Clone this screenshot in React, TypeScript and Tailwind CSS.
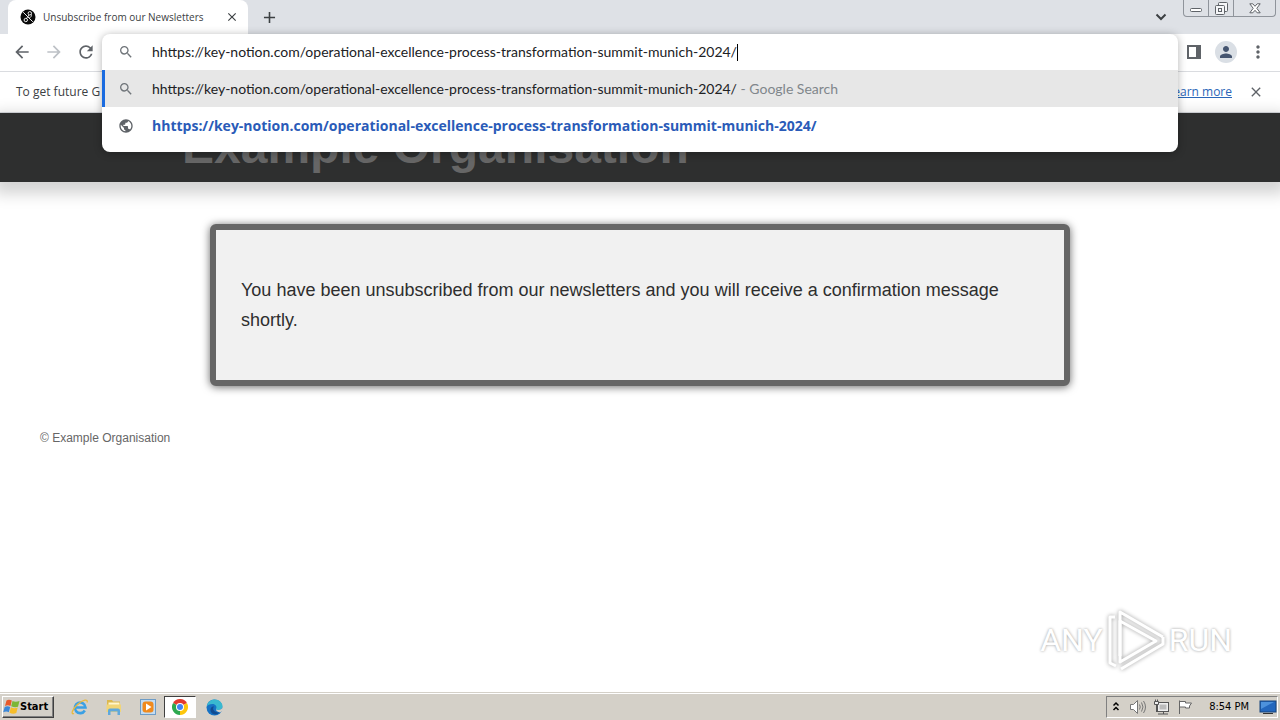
import React, { useState } from 'react';
import { MdSearch, MdPublic, MdArrowBack, MdArrowForward, MdRefresh, MdClose, MdAdd, MdMoreVert, MdPerson } from 'react-icons/md';

const PAGE_URL = 'hhttps://key-notion.com/operational-excellence-process-transformation-summit-munich-2024/';

const TabStrip: React.FC = () => (
  <div className="flex h-[34px] items-start bg-[#dee1e6] pl-2">
    <div className="flex h-[34px] w-60 items-center rounded-t-lg bg-white pl-3 pr-2">
      <svg className="h-4 w-4 shrink-0" viewBox="0 0 16 16">
        <circle cx="8" cy="8" r="7.5" fill="#0b0b0b" />
        <g fill="none" stroke="#eee" strokeWidth="1">
          <path d="M3.2 3.200l9.600 9.600" />
          <circle cx="9.8" cy="4.300" r="1.700" />
          <circle cx="5.800" cy="11" r="1.700" />
          <path d="M9 6L6.600 9.400M11.300 5.300c.6 1.800-.6 3-2.300 4" />
        </g>
      </svg>
      <span className="ml-[7px] flex-1 whitespace-nowrap text-[10px] text-[#3c4043]">Unsubscribe from our Newsletters</span>
      <button aria-label="Close tab" className="flex h-4 w-4 items-center justify-center text-[#3c4043]">
        <MdClose size={14} />
      </button>
    </div>
    <button aria-label="New tab" className="ml-3 mt-2 text-[#3c4043]">
      <MdAdd size={19} />
    </button>
    <button aria-label="Search tabs" className="ml-auto mr-4 mt-3 text-[#3c4043]">
      <svg width="12" height="10" viewBox="0 0 12 10" fill="none" stroke="currentColor" strokeWidth="2">
        <path d="M1.500 2.500L6 7l4.500-4.500" />
      </svg>
    </button>
    <div className="mr-1 flex h-[17px] divide-x divide-[#8f949b] rounded-b border border-t-0 border-[#8f949b] text-[#5f6368]">
      <button aria-label="Minimize" className="flex w-[25px] items-end justify-center pb-1">
        <svg width="12" height="4" viewBox="0 0 12 4"><rect x=".5" y=".5" width="11" height="3" rx="1" fill="#fff" stroke="currentColor" /></svg>
      </button>
      <button aria-label="Restore" className="flex w-[25px] items-center justify-center">
        <svg width="13" height="13" viewBox="0 0 13 13" fill="#f5f6f8" stroke="currentColor">
          <rect x="3.500" y=".5" width="9" height="9" rx="1" />
          <rect x=".5" y="3.500" width="9" height="9" rx="1" />
          <rect x="3.500" y="6.500" width="3" height="3" />
        </svg>
      </button>
      <button aria-label="Close window" className="flex w-[41px] items-center justify-center">
        <svg width="12" height="11" viewBox="0 0 12 11" fill="#fff" stroke="currentColor">
          <path d="M.8.8h3L6 3.300 8.200.8h3L7.800 5.300l3.400 4.500h-3L6 7.300 3.800 9.800h-3l3.400-4.500z" />
        </svg>
      </button>
    </div>
  </div>
);

const Omnibox: React.FC = () => {
  const [value, setValue] = useState(PAGE_URL);

  return (
    <div className="relative z-10 h-9 min-w-0 flex-1">
      <div className="absolute inset-x-0 top-0 overflow-hidden rounded-lg bg-white pb-2 font-[Lato,'Open_Sans',sans-serif] text-sm text-[#202124] shadow-[0_1px_8px_rgba(0,0,0,0.3)]">
        <label className="flex h-9 items-center pl-4">
          <MdSearch size={16} className="mr-[18px] text-[#70757a]" />
          <input
            aria-label="Address and search bar"
            value={value}
            onChange={(e) => setValue(e.target.value)}
            className="[field-sizing:content] outline-none"
          />
          <span className="h-[17px] w-px bg-black" />
        </label>
        <button className="flex h-[37px] w-full items-center border-l-[3px] border-[#1a6be0] bg-[#e7e7e7] pl-[13px] text-left">
          <MdSearch size={16} className="mr-[18px] text-[#70757a]" />
          <span className="whitespace-pre">{PAGE_URL}<span className="text-[#80868b]"> - Google Search</span></span>
        </button>
        <button className="flex h-[37px] w-full items-center pl-4 text-left">
          <MdPublic size={16} className="mr-[18px] text-[#5f6368]" />
          <span className="font-['Open_Sans','Noto_Sans',sans-serif] font-bold text-[#2a5bb8]">{PAGE_URL}</span>
        </button>
      </div>
    </div>
  );
};

const Toolbar: React.FC = () => (
  <div className="flex h-[38px] items-start border-b border-[#dadce0] bg-white text-[#5f6368]">
    <div className="flex h-9 w-[102px] items-center gap-3 pl-3">
      <button aria-label="Back"><MdArrowBack size={20} /></button>
      <button aria-label="Forward" className="text-[#bdc1c6]"><MdArrowForward size={20} /></button>
      <button aria-label="Reload"><MdRefresh size={20} /></button>
    </div>
    <Omnibox />
    <div className="flex h-9 w-[102px] items-center pl-2">
      <button aria-label="Side panel">
        <svg width="16" height="16" viewBox="0 0 16 16">
          <path fill="currentColor" fillRule="evenodd" d="M1 1h14v14H1zM3 3v10h7V3z" />
        </svg>
      </button>
      <button aria-label="Profile" className="ml-[13px] flex h-[22px] w-[22px] items-center justify-center rounded-full bg-[#dadfe5] text-[#44546f]">
        <MdPerson size={18} />
      </button>
      <button aria-label="Menu" className="ml-[11px]"><MdMoreVert size={20} /></button>
    </div>
  </div>
);

const InfoBar: React.FC = () => (
  <div className="flex h-[41px] items-center border-b border-[#dadce0] bg-white pl-4 pr-4 text-xs text-[#3c4043]">
    <span className="whitespace-nowrap">To get future G</span>
    <a href="#learn" className="ml-auto whitespace-nowrap text-[#2a66b8] underline">Learn more</a>
    <button aria-label="Dismiss" className="ml-4 text-[#5f6368]"><MdClose size={16} /></button>
  </div>
);

const Watermark: React.FC = () => (
  <div className="absolute bottom-5 right-12 flex items-center gap-[3px] font-[Roboto,'Liberation_Sans',sans-serif] text-[32px] leading-[60px] text-white [text-shadow:0_0_3px_rgba(0,0,0,0.4)]">
    <span>ANY</span>
    <svg width="60" height="64" viewBox="0 0 60 64" fill="none" stroke="#fff" strokeWidth="3" strokeLinejoin="round" className="drop-shadow-[0_0_2px_rgba(0,0,0,0.4)]">
      <path d="M14 48V4L57 29" />
      <path d="M9 9H4v46l6 3" />
      <path d="M14 13l36 20-36 21z" />
      <path d="M15 61l42-25v-7" />
    </svg>
    <span>RUN</span>
  </div>
);

const Page: React.FC = () => (
  <main className="relative flex-1 bg-white font-['Liberation_Sans',Arial,sans-serif]">
    <header className="h-[69px] bg-[#2e2f2f] shadow-[0_6px_14px_6px_rgba(0,0,0,0.17)]">
      <h1 className="mx-auto max-w-[916px] pt-1 text-5xl font-bold leading-[60px] text-[#666]">Example Organisation</h1>
    </header>
    <section className="mx-auto mt-[42px] max-w-[860px] rounded-md border-[6px] border-[#666] bg-[#f1f1f1] px-[25px] py-[45px] text-lg leading-[30px] text-[#2e2e2e] shadow-[0_1px_8px_rgba(0,0,0,0.6)]">
      <p>You have been unsubscribed from our newsletters and you will receive a confirmation message shortly.</p>
    </section>
    <footer className="px-10 pt-11 text-xs text-[#666]">© Example Organisation</footer>
    <Watermark />
  </main>
);

const WindowsLogo: React.FC = () => (
  <svg width="17" height="16" viewBox="0 0 17 16">
    <path fill="#e8592b" d="M3.500 1.500Q6 0 8.800 1.600L7.500 7Q5 5.700 2 6.900z" />
    <path fill="#7cb637" d="M9.500 2Q12.500 3.500 16.500 2L15 7.700Q12 8.800 8.200 7.300z" />
    <path fill="#3b87d8" d="M1.700 7.900Q4.500 6.700 7.200 8L5.800 13.200Q3.500 11.800.2 13.200z" />
    <path fill="#f6bd2a" d="M7.900 8.300Q11 9.800 14.700 8.600L13.300 14Q10 15.500 6.500 13.700z" />
  </svg>
);

const Taskbar: React.FC = () => (
  <div className="flex h-7 shrink-0 items-center border-t border-[#d4d0c8] bg-[#d4d0c8] px-[2px] pt-px shadow-[inset_0_1px_0_#fff]">
    <button className="flex h-[22px] w-[52px] items-center border border-[#404040] border-l-white border-t-white font-['DejaVu_Sans_Condensed','Noto_Sans',sans-serif] text-[11px] font-bold text-black shadow-[inset_-1px_-1px_#808080]">
      <WindowsLogo />Start
    </button>
    <div className="ml-[9px] flex items-center">
      <button aria-label="Internet Explorer" className="flex h-[22px] w-[34px] items-center justify-center">
        <svg width="18" height="18" viewBox="0 0 18 18" fill="none">
          <path d="M13.800 12.500A5.300 5.300 0 1 1 14.500 9.500H4.500" stroke="#3aa0e4" strokeWidth="2.600" />
          <path d="M3 15.500C-.5 17 1 11.500 6.500 6.500S17.500.5 16 4.500" stroke="#e9b93c" strokeWidth="1.300" />
        </svg>
      </button>
      <button aria-label="File Explorer" className="flex h-[22px] w-[34px] items-center justify-center">
        <svg width="18" height="18" viewBox="0 0 18 18">
          <path d="M2 2h5l1 1.500h7V9H2z" fill="#dcb84e" />
          <path d="M3.500 4.500h11V10h-11z" fill="#fff6cc" />
          <path d="M1.500 6.500h14.500V14H1.500z" fill="#f1d577" />
          <path d="M3 17v-4.500q0-2 2-2h8q2 0 2 2V17h-2.500v-3.500h-7V17z" fill="#5fa8dc" />
        </svg>
      </button>
      <button aria-label="Media Player" className="flex h-[22px] w-[33px] items-center justify-center">
        <svg width="16" height="16" viewBox="0 0 16 16">
          <rect x=".5" y=".5" width="15" height="15" fill="#c3dcf2" stroke="#6d9cc6" />
          <rect x="2.500" y="2.500" width="11" height="11" rx="3" fill="#f08a1d" />
          <path d="M6 4.500v7L11.500 8z" fill="#fff" />
        </svg>
      </button>
      <button aria-label="Google Chrome" className="flex h-[22px] w-8 items-center justify-center border border-white border-l-[#404040] border-t-[#404040] bg-white">
        <svg width="16" height="16" viewBox="0 0 16 16">
          <path d="M8 8L1.070 4A8 8 0 0 1 14.930 4z" fill="#e33b2e" />
          <path d="M8 8V16A8 8 0 0 1 1.070 4z" fill="#2da94f" />
          <path d="M8 8l6.930-4A8 8 0 0 1 8 16z" fill="#fdc60b" />
          <circle cx="8" cy="8" r="4" fill="#fff" />
          <circle cx="8" cy="8" r="3" fill="#4184f3" />
        </svg>
      </button>
      <button aria-label="Microsoft Edge" className="flex h-[22px] w-9 items-center justify-center">
        <svg width="17" height="17" viewBox="0 0 17 17">
          <circle cx="8.500" cy="8.500" r="8" fill="#1672c4" />
          <path d="M.7 7.500C1.500 3 5 .5 8.700.5c4.800 0 7.800 3.500 7.800 6.500s-2.500 4-4.500 4c-1.500 0-2.500-.7-1.700-1.700C11 7.500 9.500 5 6.500 5S1.500 6 .7 7.500z" fill="#39b9d0" />
          <path d="M10.300 9.300c-.8 1 .2 1.700 1.700 1.700 2 0 4.500-1 4.500-3.500l.5 4-3 2q-5-1-3.700-4.200z" fill="#d4d0c8" />
          <path d="M8 7.500c-2 2-.5 6 5.500 6-3.500 4-9.500 1-9-3C4.700 8.500 6 7 8 7.500z" fill="#124b91" />
        </svg>
      </button>
    </div>
    <div className="ml-auto flex h-[22px] items-center border border-white border-l-[#808080] border-t-[#808080] pl-1 font-['DejaVu_Sans_Condensed','Noto_Sans',sans-serif] text-[11px] text-black">
      <button aria-label="Show hidden icons">
        <svg width="10" height="12" viewBox="0 0 10 12" fill="none" stroke="#000" strokeWidth="1.500"><path d="M2.500 4.500L5 2l2.500 2.500M2.500 9L5 6.500 7.500 9" /></svg>
      </button>
      <svg className="ml-2" width="18" height="16" viewBox="0 0 18 16" fill="#fff" stroke="#777">
        <path d="M1.500 5.500h3l4-4v13l-4-4h-3z" />
        <path d="M10.500 5.500q1.500 2.500 0 5M12.500 3.500q3 4.500 0 9M14.500 2q4 6 0 12" fill="none" />
      </svg>
      <svg className="ml-1.5" width="17" height="16" viewBox="0 0 17 16" fill="#eee" stroke="#555">
        <rect x="4.500" y="3.500" width="11" height="9" />
        <rect x="6.500" y="5.500" width="7" height="5" fill="#bbb" stroke="none" />
        <path d="M5 15h10M10.500 12.500V15" />
        <path d="M1.500 2.500h4v3h-4zM2.500.500v2M4.500.500v2M3.500 6v7" />
      </svg>
      <svg className="ml-[7px]" width="17" height="16" viewBox="0 0 17 16" fill="#fff" stroke="#666">
        <path d="M2.500 15V1.500M2.500 2.500h6v1.500h6l-2 3v2h-4v-1h-6z" />
      </svg>
      <time className="ml-[15px]">8:54 PM</time>
      <button aria-label="Show desktop" className="ml-2.5">
        <svg width="18" height="16" viewBox="0 0 18 16">
          <rect x="1" y="2" width="16" height="11" fill="#2367bd" stroke="#17457d" />
          <path d="M2 3h13L2 10z" fill="#4d92dc" />
          <path d="M4 14.500h10" stroke="#333" strokeWidth="1" />
        </svg>
      </button>
    </div>
  </div>
);

export default function App() {
  return (
    <div className="flex min-h-screen flex-col bg-white font-['Open_Sans','Noto_Sans',sans-serif]">
      <TabStrip />
      <Toolbar />
      <InfoBar />
      <Page />
      <Taskbar />
    </div>
  );
}
